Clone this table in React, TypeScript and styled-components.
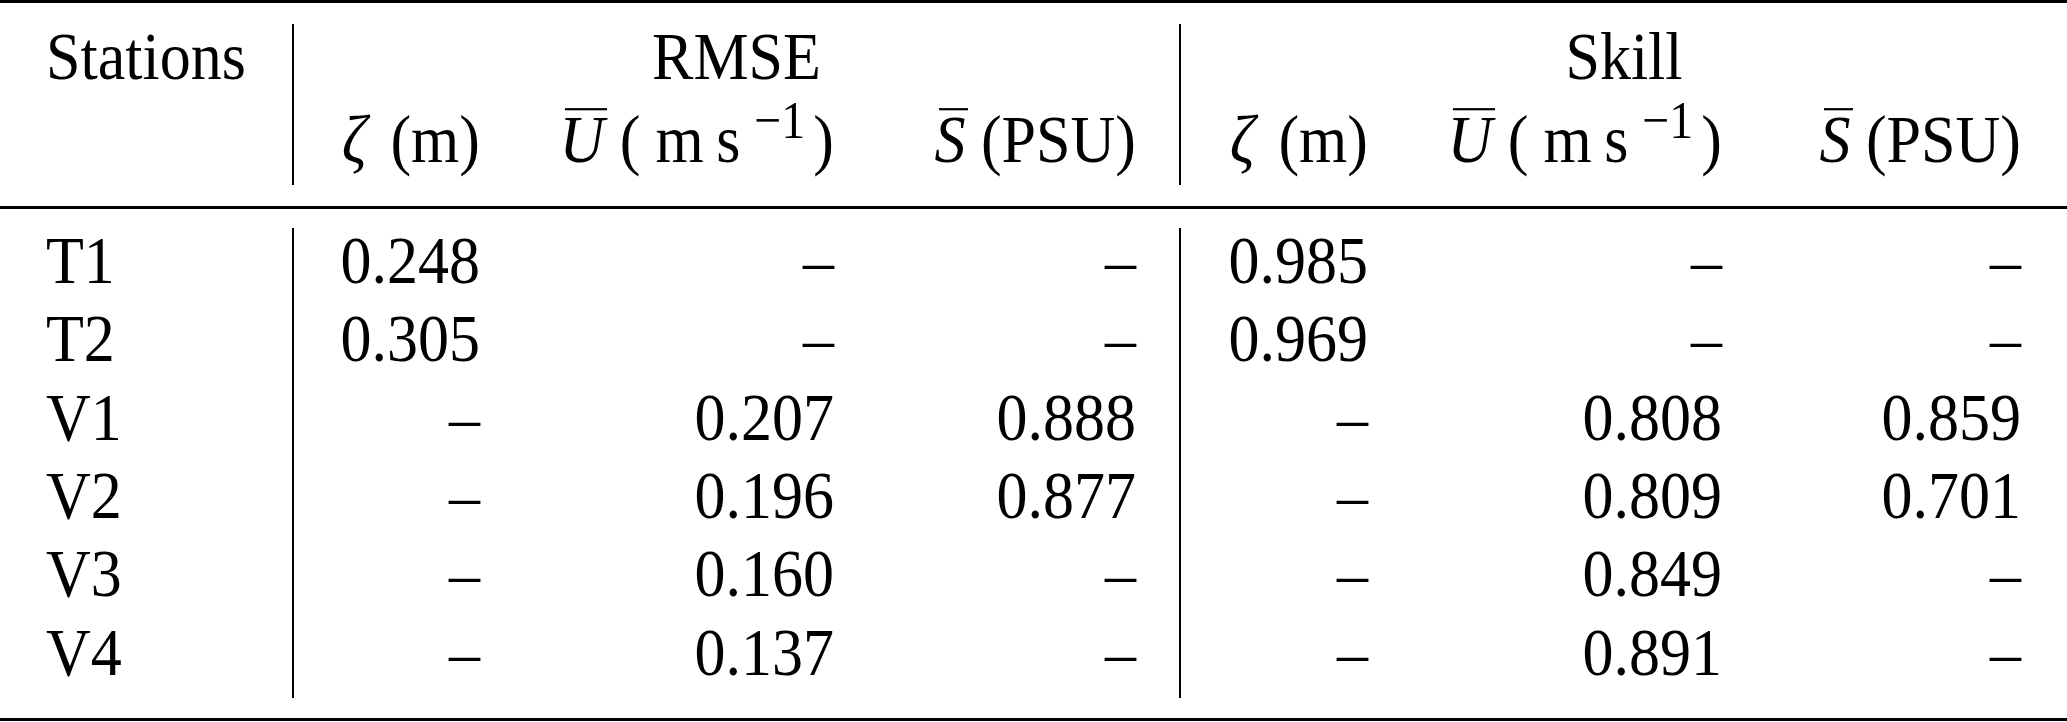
import styled, { createGlobalStyle } from "styled-components";

const GlobalStyle = createGlobalStyle`
  html, body {
    margin: 0;
    padding: 0;
    background: #fff;
  }
  body {
    font-family: "Liberation Serif", "Times New Roman", serif;
    color: #000;
  }
`;

// station | sep | z | U | S | gap | sep | z | U | S | pad
const COLUMNS = "246px 2px 186px 354px 302px 43px 2px 187px 354px 299px 46px";
const ROW = 78.4;

const rows = [
  ["T1", "0.248", "–", "–", "0.985", "–", "–"],
  ["T2", "0.305", "–", "–", "0.969", "–", "–"],
  ["V1", "–", "0.207", "0.888", "–", "0.808", "0.859"],
  ["V2", "–", "0.196", "0.877", "–", "0.809", "0.701"],
  ["V3", "–", "0.160", "–", "–", "0.849", "–"],
  ["V4", "–", "0.137", "–", "–", "0.891", "–"],
];

const valueCols = [3, 4, 5, 8, 9, 10];

function Units({ kind }: { kind: "z" | "u" | "s" }) {
  if (kind === "z") {
    return (
      <>
        <Zeta>ζ</Zeta> (m)
      </>
    );
  }
  if (kind === "u") {
    return (
      <>
        <Bar>
          <Var>U</Var>
        </Bar>{" "}
        (<Unit>m</Unit>
        {"\u2009"}s<Sup>−1</Sup>)
      </>
    );
  }
  return (
    <>
      <Bar>
        <Var>S</Var>
      </Bar>{" "}
      (PSU)
    </>
  );
}

export default function App() {
  return (
    <>
      <GlobalStyle />
      <Table>
        <Head>
          <Cell $col="1" $row={1}>
            Stations
          </Cell>
          <VRule $col={2} $top={5} $bottom={-4} />
          <Cell $col="3 / 7" $row={1} $align="center">
            RMSE
          </Cell>
          <VRule $col={7} $top={5} $bottom={-4} />
          <Cell $col="8 / 12" $row={1} $align="center">
            Skill
          </Cell>
          {(["z", "u", "s"] as const).map((k, i) => (
            <Cell key={"r" + k} $col={String(3 + i)} $row={2} $align="right">
              <Units kind={k} />
            </Cell>
          ))}
          {(["z", "u", "s"] as const).map((k, i) => (
            <Cell key={"s" + k} $col={String(8 + i)} $row={2} $align="right">
              <Units kind={k} />
            </Cell>
          ))}
        </Head>
        <Body>
          <VRule $col={2} $top={5} $bottom={-5} />
          <VRule $col={7} $top={5} $bottom={-5} />
          {rows.map((r, ri) => (
            <Row key={r[0]} r={r} index={ri + 1} />
          ))}
        </Body>
      </Table>
    </>
  );
}

function Row({ r, index }: { r: string[]; index: number }) {
  return (
    <>
      <Cell $col="1" $row={index}>
        {r[0]}
      </Cell>
      {r.slice(1).map((v, i) => (
        <Cell key={i} $col={String(valueCols[i])} $row={index} $align="right">
          {v}
        </Cell>
      ))}
    </>
  );
}

const Table = styled.div`
  width: 2067px;
  box-sizing: border-box;
  font-size: 62px;
  border-top: 3px solid #000;
  border-bottom: 3px solid #000;
`;

const Head = styled.div`
  display: grid;
  grid-template-columns: ${COLUMNS};
  grid-template-rows: ${ROW}px ${ROW}px;
  row-gap: 5px;
  padding: 16px 0 25px 46px;
  border-bottom: 3px solid #000;
`;

const Body = styled.div`
  display: grid;
  grid-template-columns: ${COLUMNS};
  grid-template-rows: repeat(6, ${ROW}px);
  padding: 14px 0 25px 46px;
`;

// the printed type is a little taller than it is wide, so stretch around the baseline
const Cell = styled.div<{ $col: string; $row: number; $align?: string }>`
  grid-column: ${(p) => p.$col};
  grid-row: ${(p) => p.$row};
  text-align: ${(p) => p.$align ?? "left"};
  line-height: ${ROW}px;
  white-space: nowrap;
  transform: scaleY(1.1);
  transform-origin: 0 60px;
`;

const VRule = styled.div<{ $col: number; $top: number; $bottom: number }>`
  grid-column: ${(p) => p.$col};
  grid-row: 1 / -1;
  background: #000;
  margin: ${(p) => p.$top}px 0 ${(p) => p.$bottom}px;
`;

const Var = styled.span`
  font-style: italic;
`;

const Zeta = styled.span`
  font-style: italic;
  margin-right: 8px;
`;

const Bar = styled.span`
  position: relative;
  &::before {
    content: "";
    position: absolute;
    left: 5px;
    right: -3px;
    top: 6px;
    height: 2px;
    background: #000;
  }
`;

const Unit = styled.span`
  margin-left: 15px;
`;

const Sup = styled.span`
  font-size: 48px;
  line-height: 0;
  vertical-align: 22px;
  margin: 0 8px 0 14px;
`;
